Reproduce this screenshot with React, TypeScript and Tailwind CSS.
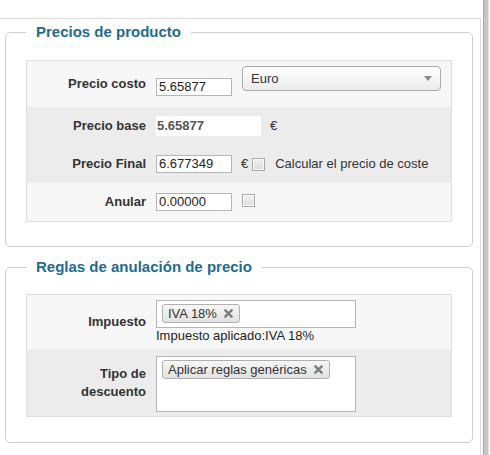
import React from 'react';

const font = { fontFamily: '"Liberation Sans", Arial, sans-serif' };

function Checkbox({ className = '' }: { className?: string }) {
  return (
    <span
      className={`inline-block w-[13px] h-[13px] border border-[#a9a9a9] bg-gradient-to-b from-[#f2f2f2] to-[#dcdcdc] shadow-[inset_0_0_0_1px_#fafafa] ${className}`}
    />
  );
}

function TextInput({ value, className = '' }: { value: string; className?: string }) {
  return (
    <div
      className={`w-[76px] h-[18px] border border-[#b5b5b5] bg-white px-[2px] text-[13px] leading-[16px] text-[#222] ${className}`}
    >
      {value}
    </div>
  );
}

function Chip({ label }: { label: string }) {
  return (
    <span className="inline-flex items-center h-[19px] rounded-[3px] border border-[#b0b0b0] bg-gradient-to-b from-[#f6f6f6] to-[#e2e2e2] pl-[5px] pr-[6px] text-[13px] leading-[17px] text-[#333]">
      {label}
      <svg viewBox="0 0 10 10" className="ml-[7px] w-[9px] h-[9px]">
        <path d="M1.5 1.5 L8.5 8.5 M8.5 1.5 L1.5 8.5" stroke="#7b7b7b" strokeWidth="2.6" strokeLinecap="round" />
      </svg>
    </span>
  );
}

function Label({ children }: { children: React.ReactNode }) {
  return (
    <div className="w-[119px] shrink-0 text-right text-[13px] font-bold leading-[18px] text-[#333]">{children}</div>
  );
}

function Fieldset({ title, className = '', children }: { title: string; className?: string; children: React.ReactNode }) {
  return (
    <fieldset className={`w-[468px] rounded-[5px] border border-[#cfcfcf] px-[20px] ${className}`}>
      <legend className="px-[10px] text-[15px] font-bold leading-[18px] text-[#236b8e]">{title}</legend>
      {children}
    </fieldset>
  );
}

export default function App() {
  return (
    <div className="flex h-[455px] w-[490px] bg-white overflow-hidden" style={font}>
      <div className="mt-[18px] w-[481px] border-t border-r border-[#dcdcdc] pl-[5px] pr-[7px] pt-[4px]">
        <Fieldset title="Precios de producto" className="pt-[19px] pb-[24px]">
          <div className="border border-[#dedede]">
            <div className="flex h-[46px] items-start gap-[10px] bg-[#f7f7f7]">
              <div className="mt-[14px]">
                <Label>Precio costo</Label>
              </div>
              <TextInput value="5.65877" className="mt-[17px]" />
              <div className="mt-[5px] flex h-[25px] w-[199px] items-center justify-between rounded-[4px] border border-[#aaaaaa] bg-gradient-to-b from-[#ffffff] to-[#ebebeb] pl-[8px] pr-[8px] text-[13px] text-[#333]">
                <span>Euro</span>
                <svg viewBox="0 0 8 5" className="w-[8px] h-[5px]">
                  <path d="M0 0 L8 0 L4 5 Z" fill="#8a8a8a" />
                </svg>
              </div>
            </div>
            <div className="bg-[#ececec]">
              <div className="flex h-[38px] items-center gap-[10px]">
                <Label>Precio base</Label>
                <div className="flex h-[20px] w-[105px] items-center bg-white px-[1px] text-[13px] font-bold text-[#555]">5.65877</div>
                <span className="ml-[-1px] text-[13px] text-[#333]">€</span>
              </div>
              <div className="flex h-[38px] items-center gap-[10px]">
                <Label>Precio Final</Label>
                <TextInput value="6.677349" />
                <div className="ml-[-1px] flex items-center text-[13px] text-[#333]">
                  <span>€</span>
                  <Checkbox className="ml-[4px]" />
                  <span className="ml-[10px]">Calcular el precio de coste</span>
                </div>
              </div>
            </div>
            <div className="flex h-[38px] items-center gap-[10px] bg-[#f7f7f7]">
              <Label>Anular</Label>
              <TextInput value="0.00000" />
              <Checkbox className="mb-[3px]" />
            </div>
          </div>
        </Fieldset>

        <Fieldset title="Reglas de anulación de precio" className="mt-[11px] pt-[18px] pb-[25px]">
          <div className="border border-[#dedede]">
            <div className="flex h-[54px] items-center gap-[10px] bg-[#f7f7f7]">
              <Label>Impuesto</Label>
              <div className="flex flex-col">
                <div className="flex h-[28px] w-[200px] items-start border border-[#b5b5b5] bg-white px-[5px] pt-[3px]">
                  <Chip label="IVA 18%" />
                </div>
                <span className="text-[13px] leading-[16px] text-[#222]">Impuesto aplicado:IVA 18%</span>
              </div>
            </div>
            <div className="flex h-[67px] items-center gap-[10px] bg-[#ececec]">
              <Label>
                Tipo de
                <br />
                descuento
              </Label>
              <div className="mt-[3px] flex h-[56px] w-[200px] items-start border border-[#b5b5b5] bg-white px-[5px] pt-[3px]">
                <Chip label="Aplicar reglas genéricas" />
              </div>
            </div>
          </div>
        </Fieldset>
      </div>
      <div className="ml-[2px] h-full w-[6px] border-l border-[#a8a8a8] border-r border-r-[#e0e0e0] bg-[#c6c6c6]" />
    </div>
  );
}
